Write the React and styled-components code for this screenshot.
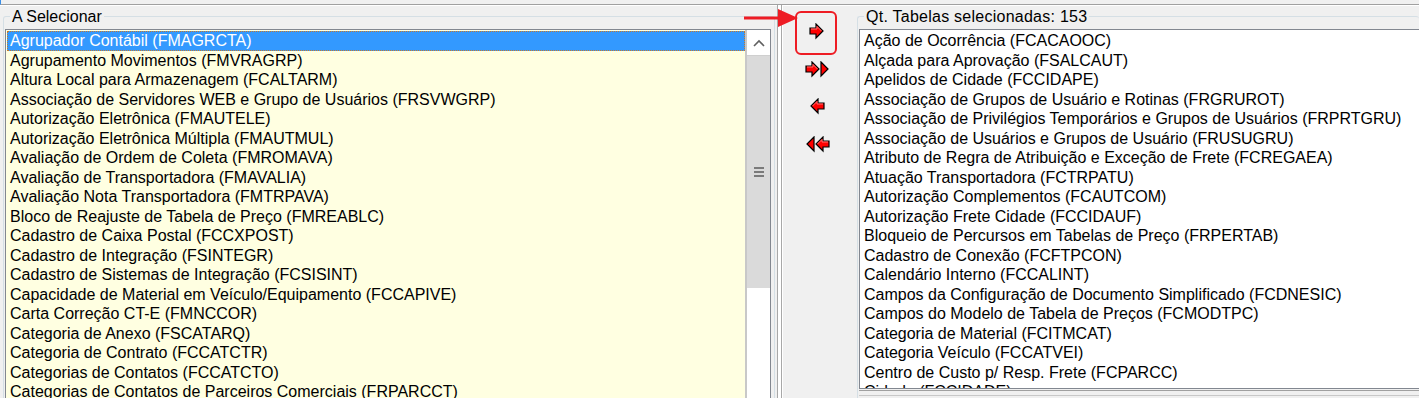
import React from "react";
import styled, { createGlobalStyle } from "styled-components";

const GlobalStyle = createGlobalStyle`
    html, body {
        margin: 0;
        padding: 0;
        background: #f0f0f0;
    }
    body {
        font-family: "Liberation Sans", Arial, sans-serif;
    }
`;

const aSelecionar = [
    "Agrupador Contábil (FMAGRCTA)",
    "Agrupamento Movimentos (FMVRAGRP)",
    "Altura Local para Armazenagem (FCALTARM)",
    "Associação de Servidores WEB e Grupo de Usuários (FRSVWGRP)",
    "Autorização Eletrônica (FMAUTELE)",
    "Autorização Eletrônica Múltipla (FMAUTMUL)",
    "Avaliação de Ordem de Coleta (FMROMAVA)",
    "Avaliação de Transportadora (FMAVALIA)",
    "Avaliação Nota Transportadora (FMTRPAVA)",
    "Bloco de Reajuste de Tabela de Preço (FMREABLC)",
    "Cadastro de Caixa Postal (FCCXPOST)",
    "Cadastro de Integração (FSINTEGR)",
    "Cadastro de Sistemas de Integração (FCSISINT)",
    "Capacidade de Material em Veículo/Equipamento (FCCAPIVE)",
    "Carta Correção CT-E (FMNCCOR)",
    "Categoria de Anexo (FSCATARQ)",
    "Categoria de Contrato (FCCATCTR)",
    "Categorias de Contatos (FCCATCTO)",
    "Categorias de Contatos de Parceiros Comerciais (FRPARCCT)",
];

const selecionadas = [
    "Ação de Ocorrência (FCACAOOC)",
    "Alçada para Aprovação (FSALCAUT)",
    "Apelidos de Cidade (FCCIDAPE)",
    "Associação de Grupos de Usuário e Rotinas (FRGRUROT)",
    "Associação de Privilégios Temporários e Grupos de Usuários (FRPRTGRU)",
    "Associação de Usuários e Grupos de Usuário (FRUSUGRU)",
    "Atributo de Regra de Atribuição e Exceção de Frete (FCREGAEA)",
    "Atuação Transportadora (FCTRPATU)",
    "Autorização Complementos (FCAUTCOM)",
    "Autorização Frete Cidade (FCCIDAUF)",
    "Bloqueio de Percursos em Tabelas de Preço (FRPERTAB)",
    "Cadastro de Conexão (FCFTPCON)",
    "Calendário Interno (FCCALINT)",
    "Campos da Configuração de Documento Simplificado (FCDNESIC)",
    "Campos do Modelo de Tabela de Preços (FCMODTPC)",
    "Categoria de Material (FCITMCAT)",
    "Categoria Veículo (FCCATVEI)",
    "Centro de Custo p/ Resp. Frete (FCPARCC)",
    "Cidade (FCCIDADE)",
];

// red block arrow with a dark edge, as in the old win32 toolbar
const ArrowIcon = ({ dir = "right", double = false }) => {
    const single = "M1 5 H7 V1 L14 8 L7 15 V11 H1 Z";
    const head = "M0 1 L7 8 L0 15 Z";
    return (
        <svg
            width={double ? 25 : 16}
            height="17"
            viewBox={double ? "0 0 25 17" : "0 0 16 17"}
            style={{ transform: dir === "left" ? "scaleX(-1)" : "none" }}
        >
            <path d={single} fill="#ff0000" stroke="#000" strokeWidth="1.2" />
            <path d="M2 6 H8 V3.5 L12.5 8" fill="none" stroke="#ff7070" strokeWidth="1" />
            {double && (
                <path d={head} transform="translate(16 0)" fill="#ff0000" stroke="#000" strokeWidth="1.2" />
            )}
        </svg>
    );
};

const Pointer = () => (
    <PointerSvg width="56" height="18" viewBox="0 0 56 18">
        <path d="M0 7.5 H34 V0 L54 9 L34 18 V10.5 H0 Z" fill="#ee1c24" />
    </PointerSvg>
);

const App = () => {
    return (
        <>
            <GlobalStyle />
            <Screen>
                <TopRule />
                <Body>
                    <LeftPane>
                        <GroupBox>
                            <Legend>A Selecionar</Legend>
                            <ListBox $bg="#ffffe1">
                                <Items>
                                    {aSelecionar.map((item, i) => (
                                        <Item key={item} $selected={i === 0}>{item}</Item>
                                    ))}
                                </Items>
                                <ScrollBar>
                                    <ScrollButton>
                                        <svg width="12" height="8" viewBox="0 0 12 8">
                                            <path d="M1 7 L6 2 L11 7" fill="none" stroke="#606060" strokeWidth="1.6" />
                                        </svg>
                                    </ScrollButton>
                                    <Thumb>
                                        <Grip />
                                        <Grip />
                                        <Grip />
                                    </Thumb>
                                </ScrollBar>
                            </ListBox>
                        </GroupBox>
                    </LeftPane>
                    <Splitter />
                    <Actions>
                        <ActionButton $highlight>
                            <ArrowIcon dir="right" />
                        </ActionButton>
                        <ActionButton>
                            <ArrowIcon dir="right" double />
                        </ActionButton>
                        <ActionButton>
                            <ArrowIcon dir="left" />
                        </ActionButton>
                        <ActionButton>
                            <ArrowIcon dir="left" double />
                        </ActionButton>
                    </Actions>
                    <RightPane>
                        <GroupBox $right>
                            <Legend $wide>Qt. Tabelas selecionadas: 153</Legend>
                            <ListBox $bg="#ffffff" $short>
                                <Items>
                                    {selecionadas.map(item => (
                                        <Item key={item}>{item}</Item>
                                    ))}
                                </Items>
                            </ListBox>
                            <BottomRule />
                        </GroupBox>
                    </RightPane>
                </Body>
                <Pointer />
            </Screen>
        </>
    );
};

const Screen = styled.div`
    position: relative;
    width: 1419px;
    height: 398px;
    overflow: hidden;
    display: flex;
    flex-direction: column;
    background: #f0f0f0;
    font-family: "Liberation Sans", Arial, sans-serif;
    font-size: 16px;
    color: #000;
`;

const TopRule = styled.div`
    height: 4px;
    flex-shrink: 0;
    border-bottom: 1px solid #a0a0a0;
    border-left: 1px solid #3a8ee6;
    box-shadow: 0 1px 0 #ffffff;
`;

const Body = styled.div`
    flex: 1;
    display: flex;
    min-height: 0;
`;

const LeftPane = styled.div`
    width: 772px;
    flex-shrink: 0;
    display: flex;
    padding-left: 3px;
`;

const GroupBox = styled.fieldset`
    flex: 1;
    min-width: 0;
    margin: 3px 0 0 0;
    padding: 4px ${p => (p.$right ? "0" : "3px")} 0 1px;
    border: 1px solid #d5dfe5;
    ${p => p.$right && "border-right: none;"}
    border-bottom: none;
    border-radius: 3px 3px 0 0;
    display: flex;
    flex-direction: column;
`;

const Legend = styled.legend`
    padding: 0 2px;
    margin-left: 5px;
    line-height: 17px;
    font-size: 16px;
    letter-spacing: ${p => (p.$wide ? "0.25px" : "0")};
    color: #000;
`;

const ListBox = styled.div`
    flex: ${p => (p.$short ? "0 0 358px" : "1")};
    min-height: 0;
    display: flex;
    background: ${p => p.$bg};
    border: 1px solid #828790;
    ${p => p.$short ? "border-right: none;" : "border-bottom: none;"}
    overflow: hidden;
`;

const Items = styled.div`
    flex: 1;
    min-width: 0;
    padding: 1px 0 0 1px;
`;

const Item = styled.div`
    height: 19.5px;
    line-height: 19.5px;
    padding-left: 3px;
    white-space: nowrap;
    box-sizing: border-box;
    background: ${p => (p.$selected ? "#3399ff" : "transparent")};
    color: ${p => (p.$selected ? "#ffffff" : "#000000")};
    outline: ${p => (p.$selected ? "1px dotted #c47a2c" : "none")};
    outline-offset: -1px;
`;

const ScrollBar = styled.div`
    width: 23px;
    flex-shrink: 0;
    display: flex;
    flex-direction: column;
    background: #ffffff;
    border-left: 2px solid #c8c8c8;
`;

const ScrollButton = styled.div`
    height: 25px;
    display: flex;
    align-items: center;
    justify-content: center;
    background: #ffffff;
`;

const Thumb = styled.div`
    height: 232px;
    background: #dadada;
    border-top: 1px solid #cfcfcf;
    display: flex;
    flex-direction: column;
    align-items: center;
    justify-content: center;
    gap: 2px;
`;

const Grip = styled.div`
    width: 10px;
    height: 2px;
    background: #7a7a7a;
`;

const Splitter = styled.div`
    width: 3px;
    flex-shrink: 0;
    margin-left: 2px;
    border-left: 1px solid #a8a8a8;
    border-right: 1px solid #a8a8a8;
    background: #ffffff;
`;

const Actions = styled.div`
    width: 68px;
    flex-shrink: 0;
    display: flex;
    flex-direction: column;
    align-items: center;
    padding: 8px 6px 0 0;
    border-left: 1px solid #ffffff;
`;

const ActionButton = styled.div`
    position: relative;
    width: 40px;
    height: 37.5px;
    display: flex;
    align-items: center;
    justify-content: center;
    ${p =>
        p.$highlight &&
        `
        &::before {
            content: "";
            position: absolute;
            left: -2px;
            top: -2px;
            right: 0;
            bottom: -4px;
            border: 2px solid #ee1c24;
            border-radius: 6px;
        }
    `}
`;

const RightPane = styled.div`
    flex: 1;
    min-width: 0;
    display: flex;
`;

const BottomRule = styled.div`
    height: 4px;
    border-top: 1px solid #a0a0a0;
    border-bottom: 1px solid #c8c8c8;
    margin-top: 1px;
`;

const PointerSvg = styled.svg`
    position: absolute;
    left: 744px;
    top: 9px;
`;

export default App;
